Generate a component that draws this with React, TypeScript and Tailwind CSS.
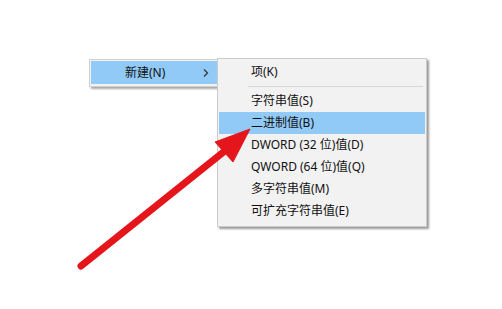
const font = { fontFamily: '"Noto Sans", "Noto Sans CJK SC", sans-serif' };

const items = [
  { label: "字符串值(S)" },
  { label: "二进制值(B)", active: true },
  { label: "DWORD (32 位)值(D)" },
  { label: "QWORD (64 位)值(Q)" },
  { label: "多字符串值(M)" },
  { label: "可扩充字符串值(E)" },
];

function MenuItem({ label, active }: { label: string; active?: boolean }) {
  return (
    <div
      className={`h-[22px] flex items-center pl-[32px] text-[12px] leading-none text-[#111] ${
        active ? "bg-[#91c9f7]" : ""
      }`}
    >
      {label}
    </div>
  );
}

export default function App() {
  return (
    <div className="relative w-[502px] h-[309px] bg-white overflow-hidden" style={font}>
      {/* parent menu */}
      <div className="absolute left-[89px] top-[59px] w-[132px] h-[28px] border border-[#cfcfcf] bg-[#f2f2f2] p-[1px] shadow-[2px_2px_2px_rgba(0,0,0,0.35)]">
        <div className="h-[23px] bg-[#91c9f7] flex items-center pl-[34px] pr-[8px] text-[12px] leading-none text-[#111]">
          <span className="flex-1">新建(N)</span>
          <svg width="6" height="8" viewBox="0 0 6 8" className="mr-[2px]">
            <path d="M1 0.5 L4.5 4 L1 7.5" fill="none" stroke="#333" strokeWidth="1.2" />
          </svg>
        </div>
      </div>

      {/* submenu */}
      <div className="absolute left-[217px] top-[58px] w-[210px] h-[169px] border border-[#cccccc] bg-[#f2f2f2] px-[1px] pt-[2px] shadow-[2px_2px_2px_rgba(0,0,0,0.4)]">
        <MenuItem label="项(K)" />
        <div className="h-[7px] flex items-center pl-[29px] pr-[2px]">
          <div className="h-px w-full bg-[#d7d7d7]" />
        </div>
        {items.map((it) => (
          <MenuItem key={it.label} label={it.label} active={it.active} />
        ))}
      </div>

      {/* red arrow */}
      <svg className="absolute left-0 top-0" width="502" height="309" viewBox="0 0 502 309">
        <line x1="81" y1="266" x2="226" y2="150" stroke="#e5161b" strokeWidth="7" strokeLinecap="round" />
        <polygon points="250,129 215,142 233,162" fill="#e5161b" stroke="#e5161b" strokeWidth="1" strokeLinejoin="round" />
      </svg>
    </div>
  );
}
